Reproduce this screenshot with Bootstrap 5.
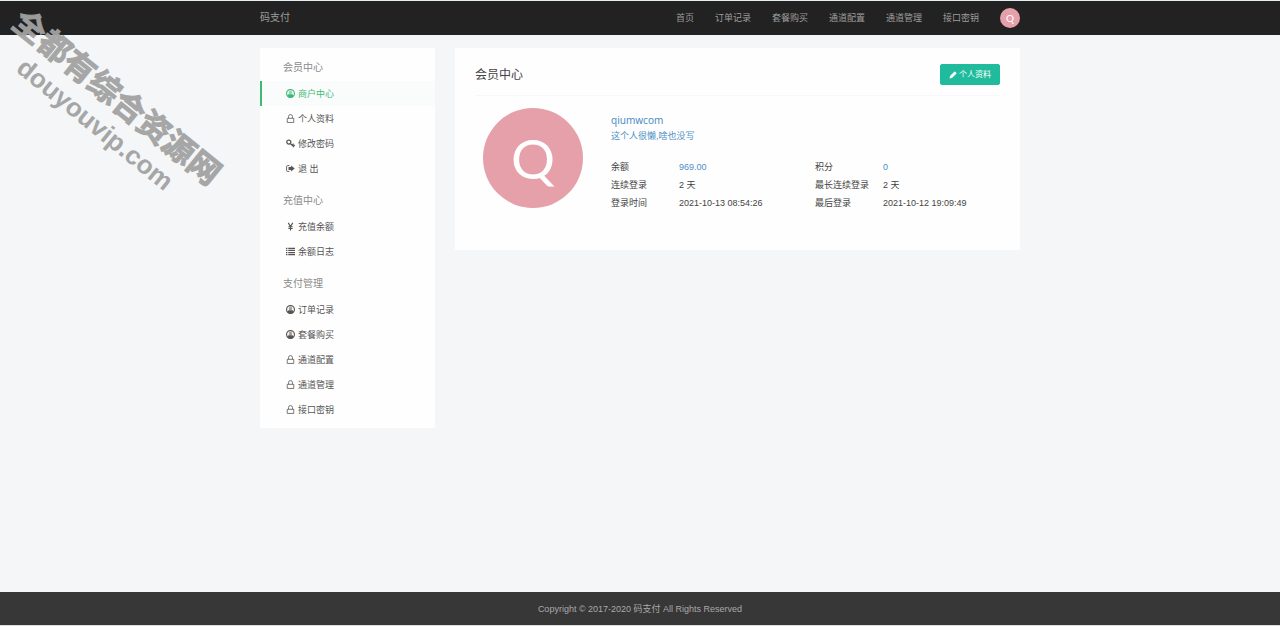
<!DOCTYPE html>
<html lang="zh-CN">
<head>
<meta charset="utf-8">
<meta name="viewport" content="width=device-width, initial-scale=1">
<title>会员中心 - 码支付</title>
<link href="https://cdn.jsdelivr.net/npm/bootstrap@5.3.0/dist/css/bootstrap.min.css" rel="stylesheet">
<style>
  body { background: #f4f6f8; font: 9px/18px "Liberation Sans", "Noto Sans CJK SC", sans-serif; color: #444; border-top: 1px solid #e4eeee; border-bottom: 1px solid #ddd; }
  a { text-decoration: none; }
  .page-width { max-width: 760px; width: 100%; }
  .topbar { background: #222; min-height: 34px; }
  .topbar a { color: #9d9d9d; }
  .topbar .site-name { font-size: 10px; }
  .menu-links { gap: 21px; }
  .avatar-sm, .avatar-lg { background: #e6a0aa; color: #fff; font-family: Lato, sans-serif; }
  .topbar .avatar-sm { width: 20px; height: 20px; color: #fff; font-size: 10px; }
  .avatar-lg { width: 100px; height: 100px; font-size: 55px; margin: 0 28px 0 8px; }
  .content-gap { gap: 20px; padding-top: 13px; }
  .side-panel { width: 175px; background: #fefefe; padding: 7px 0 6px; }
  .side-title { font-size: 10px; line-height: 26px; padding-left: 23px; margin: 0; color: #8a8a8a; font-weight: 400; }
  .side-group + .side-group { margin-top: 7px; }
  .side-link { height: 25px; padding-left: 24px; gap: 3px; color: #555; border-left: 2px solid transparent; }
  .side-link.active { color: #3dbb76; border-color: #3dbb76; background: #fafbfb; }
  .side-link svg { width: 9px; height: 9px; }
  .main-panel { background: #fefefe; padding: 16px 20px 38px; min-width: 0; }
  .panel-head { border-bottom: 1px solid #f8f8f8; padding-bottom: 10px; margin-bottom: 12px; }
  .panel-head h1 { font-size: 12px; line-height: 20px; margin: 0; font-weight: 400; color: #444; }
  .edit-btn { --bs-btn-color: #fff; --bs-btn-bg: #1fbb9c; --bs-btn-border-color: #1fbb9c; --bs-btn-hover-bg: #18a689; --bs-btn-hover-color: #fff; --bs-btn-font-size: 8px; --bs-btn-line-height: 19px; --bs-btn-padding-y: 0; --bs-btn-padding-x: 8px; --bs-btn-border-radius: 2px; gap: 2px; }
  .edit-btn svg { width: 8px; height: 8px; }
  .blue-text { color: #4d8ec7; }
  .nick { font: 10px/16px "Noto Sans", sans-serif; margin-top: 4px; }
  .motto { line-height: 16px; margin-bottom: 14px; }
  .stats { width: 100%; table-layout: fixed; }
  .stats th { font-weight: 400; width: 68px; }
  .stats th, .stats td { padding: 0; height: 18px; white-space: nowrap; }
  .stats .first-value { width: 136px; }
  .site-footer { background: #373737; color: #aaa; min-height: 33px; }
  .watermark { left: -22px; top: 76px; width: 256px; transform: rotate(39deg); color: #a2a2a2; font-weight: 700; line-height: 34px; pointer-events: none; z-index: 5; opacity: .95; }
  .watermark-name { font-size: 32px; -webkit-text-stroke: 1px #a2a2a2; }
  .watermark-host { font-size: 26px; }
</style>
</head>
<body class="d-flex flex-column min-vh-100 position-relative">
<svg class="d-none" xmlns="http://www.w3.org/2000/svg">
  <symbol id="i-user" viewBox="0 0 16 16"><circle cx="8" cy="8" r="7" fill="none" stroke="currentColor" stroke-width="2"/><circle cx="8" cy="6.500" r="3.200" fill="currentColor" opacity=".55"/><path fill="currentColor" d="M2 12c1-2 2.500-2.500 4-2.500h4c1.500 0 3 .5 4 2.500a7 7 0 0 1-12 0Z"/></symbol>
  <symbol id="i-lock" viewBox="0 0 16 16"><path fill="none" stroke="currentColor" stroke-width="1.400" d="M4.500 7.500V4.500a3.500 3.500 0 0 1 7 0v3M2.200 7.700h11.600v7.300H2.200z"/></symbol>
  <symbol id="i-key" viewBox="0 0 16 16"><circle cx="5" cy="5.500" r="3.600" fill="none" stroke="currentColor" stroke-width="2.200"/><path fill="none" stroke="currentColor" stroke-width="2.200" d="m7.500 8 7 6.500M11 11l2.500-2.500M13 13l2.500-2.500"/></symbol>
  <symbol id="i-out" viewBox="0 0 16 16"><path fill="none" stroke="currentColor" stroke-width="1.600" d="M6 2.800H3A2 2 0 0 0 1 4.800v6.400a2 2 0 0 0 2 2h3"/><path fill="currentColor" d="M9 2.500 15.500 8 9 13.500V10.500H4.500v-5H9z"/></symbol>
  <symbol id="i-yen" viewBox="0 0 16 16"><path fill="none" stroke="currentColor" stroke-width="2" d="m4 1.500 4 6.500 4-6.500M8 8v7M4.200 8.500h7.600M4.200 11.500h7.600"/></symbol>
  <symbol id="i-list" viewBox="0 0 16 16"><path fill="none" stroke="currentColor" stroke-width="2.200" d="M0 2.500h2.500M0 6.200h2.500M0 9.900h2.500M0 13.600h2.500M4 2.500h12M4 6.200h12M4 9.900h12M4 13.600h12"/></symbol>
  <symbol id="i-pencil" viewBox="0 0 16 16"><path fill="currentColor" d="m1 15 1-5L10.500 1.500q1-1 2 0l2 2q1 1 0 2L6 14z"/></symbol>
</svg>

<header class="topbar d-flex">
  <div class="page-width mx-auto d-flex align-items-center justify-content-between">
    <a href="#" class="site-name">码支付</a>
    <nav class="menu-links d-flex align-items-center">
      <a href="#">首页</a>
      <a href="#">订单记录</a>
      <a href="#">套餐购买</a>
      <a href="#">通道配置</a>
      <a href="#">通道管理</a>
      <a href="#">接口密钥</a>
      <a href="#" class="avatar-sm rounded-circle d-flex align-items-center justify-content-center">Q</a>
    </nav>
  </div>
</header>

<div class="page-width mx-auto flex-grow-1">
  <div class="content-gap d-flex align-items-start">
    <aside class="side-panel flex-shrink-0">
      <div class="side-group">
        <h2 class="side-title">会员中心</h2>
        <a href="#" class="side-link active d-flex align-items-center"><svg><use href="#i-user"/></svg>商户中心</a>
        <a href="#" class="side-link d-flex align-items-center"><svg><use href="#i-lock"/></svg>个人资料</a>
        <a href="#" class="side-link d-flex align-items-center"><svg><use href="#i-key"/></svg>修改密码</a>
        <a href="#" class="side-link d-flex align-items-center"><svg><use href="#i-out"/></svg>退 出</a>
      </div>
      <div class="side-group">
        <h2 class="side-title">充值中心</h2>
        <a href="#" class="side-link d-flex align-items-center"><svg><use href="#i-yen"/></svg>充值余额</a>
        <a href="#" class="side-link d-flex align-items-center"><svg><use href="#i-list"/></svg>余额日志</a>
      </div>
      <div class="side-group">
        <h2 class="side-title">支付管理</h2>
        <a href="#" class="side-link d-flex align-items-center"><svg><use href="#i-user"/></svg>订单记录</a>
        <a href="#" class="side-link d-flex align-items-center"><svg><use href="#i-user"/></svg>套餐购买</a>
        <a href="#" class="side-link d-flex align-items-center"><svg><use href="#i-lock"/></svg>通道配置</a>
        <a href="#" class="side-link d-flex align-items-center"><svg><use href="#i-lock"/></svg>通道管理</a>
        <a href="#" class="side-link d-flex align-items-center"><svg><use href="#i-lock"/></svg>接口密钥</a>
      </div>
    </aside>

    <main class="main-panel flex-grow-1">
      <div class="panel-head d-flex justify-content-between align-items-center">
        <h1>会员中心</h1>
        <button type="button" class="btn edit-btn d-flex align-items-center"><svg><use href="#i-pencil"/></svg>个人资料</button>
      </div>
      <div class="d-flex align-items-start">
        <div class="avatar-lg rounded-circle flex-shrink-0 d-flex align-items-center justify-content-center">Q</div>
        <div class="flex-grow-1">
          <div class="nick"><a href="#" class="blue-text">qiumwcom</a></div>
          <div class="motto"><a href="#" class="blue-text">这个人很懒,啥也没写</a></div>
          <table class="stats">
            <tr><th scope="row">余额</th><td class="first-value"><a href="#" class="blue-text">969.00</a></td><th scope="row">积分</th><td><a href="#" class="blue-text">0</a></td></tr>
            <tr><th scope="row">连续登录</th><td>2 天</td><th scope="row">最长连续登录</th><td>2 天</td></tr>
            <tr><th scope="row">登录时间</th><td>2021-10-13 08:54:26</td><th scope="row">最后登录</th><td>2021-10-12 19:09:49</td></tr>
          </table>
        </div>
      </div>
    </main>
  </div>
</div>

<footer class="site-footer d-flex align-items-center justify-content-center">Copyright © 2017-2020 码支付 All Rights Reserved</footer>

<div class="watermark position-absolute text-center text-nowrap">
  <div class="watermark-name">全都有综合资源网</div>
  <div class="watermark-host">douyouvip.com</div>
</div>
<script src="https://cdn.jsdelivr.net/npm/bootstrap@5.3.0/dist/js/bootstrap.bundle.min.js"></script>
</body>
</html>
